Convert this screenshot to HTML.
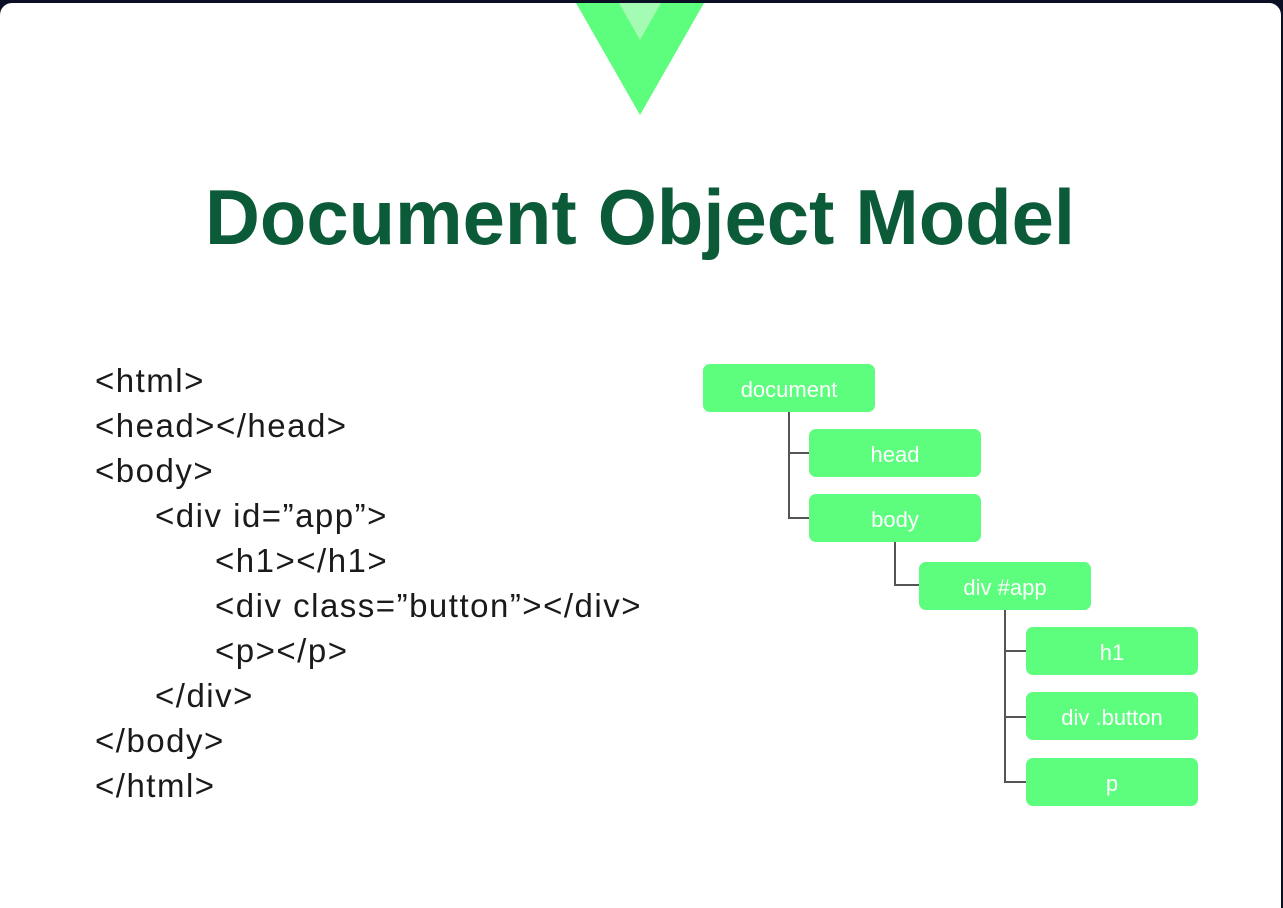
<!DOCTYPE html>
<html><head><meta charset="utf-8"><style>
html,body{margin:0;padding:0;width:1283px;height:905px;overflow:hidden;background:#0a0f24;}
#card{position:absolute;left:0;top:3px;width:1281px;height:905px;background:#fff;border-radius:12px 12px 0 0;}
.c{position:absolute;font-family:"Liberation Sans",sans-serif;font-size:33px;letter-spacing:1.5px;color:#1a1a1a;white-space:pre;line-height:45px;}
.b{position:absolute;width:172px;height:48px;background:#5dfd7d;border-radius:7px;color:#fff;font-family:"Liberation Sans",sans-serif;font-size:22px;line-height:51px;text-align:center;}
.l{position:absolute;background:#555;}
</style></head><body>
<div id="card"></div>
<svg style="position:absolute;left:0;top:0" width="1283" height="300">
<polygon points="576,3 704,3 640,115" fill="#5dfd7d"/>
<polygon points="619,3 661,3 640,40" fill="#a4fcb4"/>
<text x="205" y="244" textLength="870" lengthAdjust="spacingAndGlyphs" font-family="Liberation Sans, sans-serif" font-weight="bold" font-size="78" fill="#0b5a38">Document Object Model</text>
</svg>
<div class="c" style="left:95px;top:358px">&lt;html&gt;</div>
<div class="c" style="left:95px;top:403px">&lt;head&gt;&lt;/head&gt;</div>
<div class="c" style="left:95px;top:448px">&lt;body&gt;</div>
<div class="c" style="left:155px;top:493px">&lt;div id=”app”&gt;</div>
<div class="c" style="left:215px;top:538px">&lt;h1&gt;&lt;/h1&gt;</div>
<div class="c" style="left:215px;top:583px">&lt;div class=”button”&gt;&lt;/div&gt;</div>
<div class="c" style="left:215px;top:628px">&lt;p&gt;&lt;/p&gt;</div>
<div class="c" style="left:155px;top:673px">&lt;/div&gt;</div>
<div class="c" style="left:95px;top:718px">&lt;/body&gt;</div>
<div class="c" style="left:95px;top:763px">&lt;/html&gt;</div>
<div class="l" style="left:788px;top:411px;width:2px;height:108px"></div>
<div class="l" style="left:788px;top:452px;width:22px;height:2px"></div>
<div class="l" style="left:788px;top:517px;width:22px;height:2px"></div>
<div class="l" style="left:894px;top:541px;width:2px;height:45px"></div>
<div class="l" style="left:894px;top:584px;width:26px;height:2px"></div>
<div class="l" style="left:1004px;top:609px;width:2px;height:174px"></div>
<div class="l" style="left:1004px;top:650px;width:23px;height:2px"></div>
<div class="l" style="left:1004px;top:716px;width:23px;height:2px"></div>
<div class="l" style="left:1004px;top:781px;width:23px;height:2px"></div>
<div class="b" style="left:703px;top:364px">document</div>
<div class="b" style="left:809px;top:429px">head</div>
<div class="b" style="left:809px;top:494px">body</div>
<div class="b" style="left:919px;top:562px">div #app</div>
<div class="b" style="left:1026px;top:627px">h1</div>
<div class="b" style="left:1026px;top:692px">div .button</div>
<div class="b" style="left:1026px;top:758px">p</div>
</body></html>
